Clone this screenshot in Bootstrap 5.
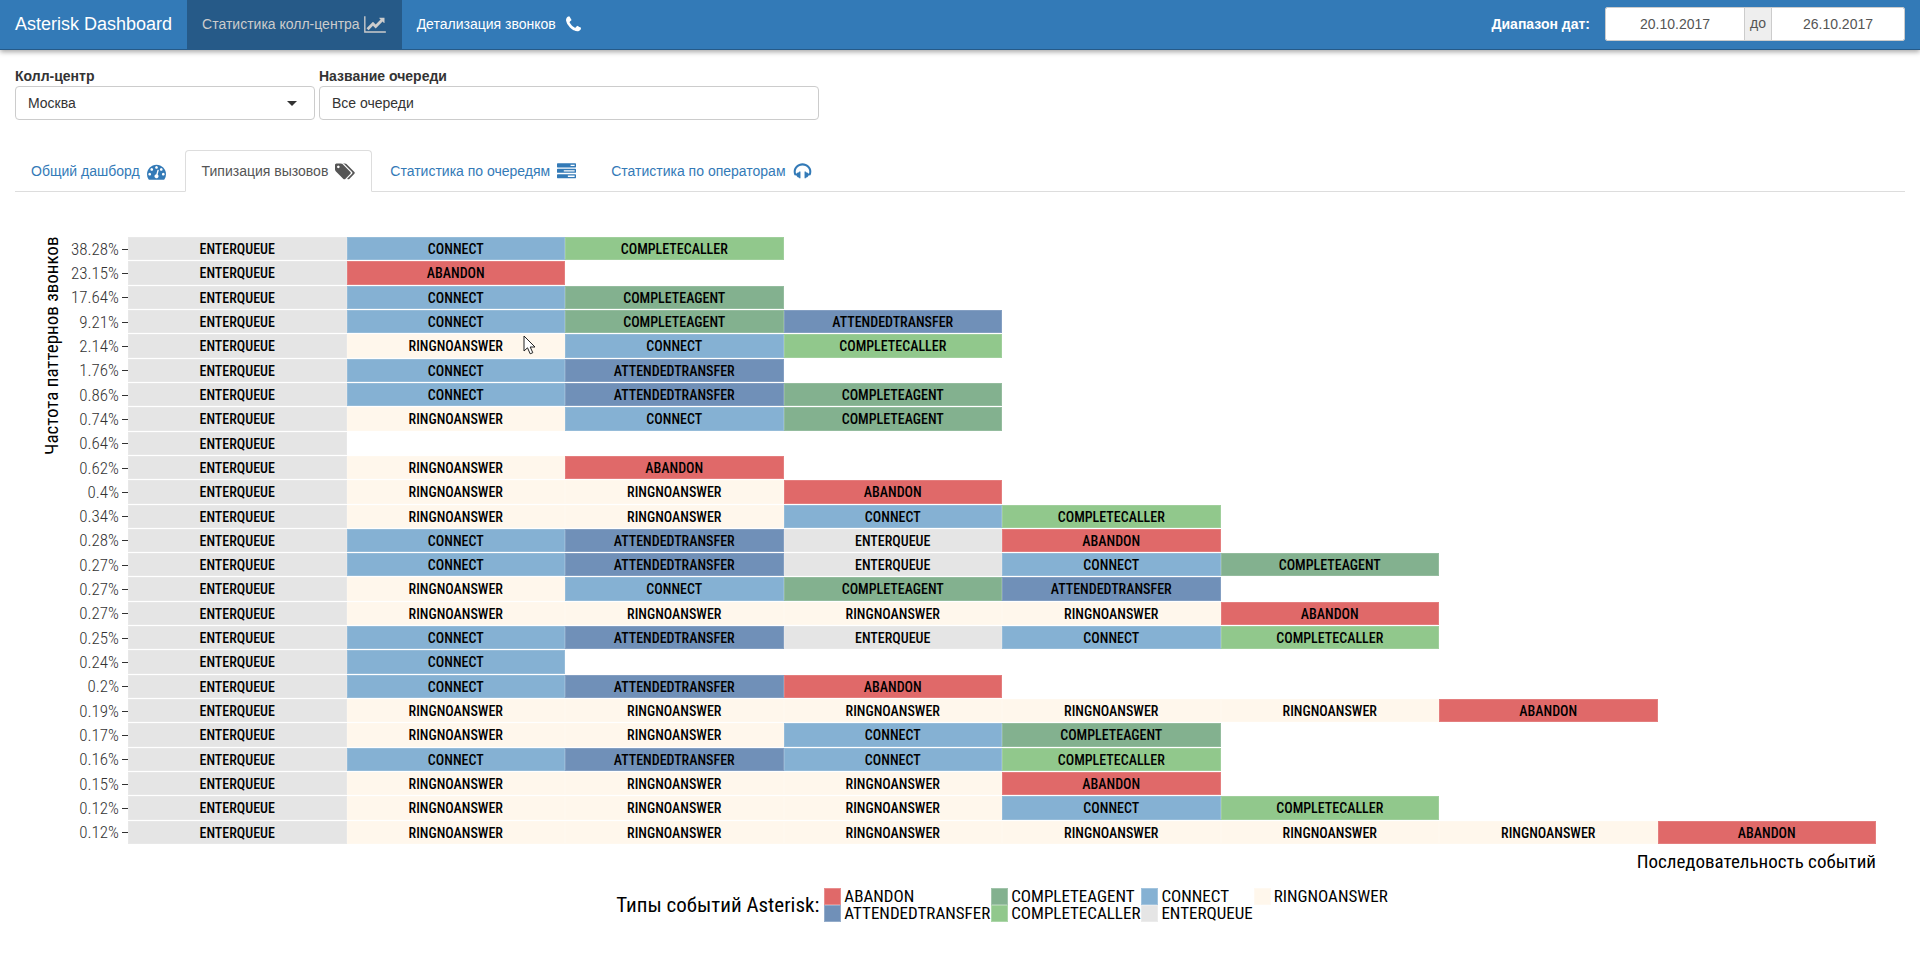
<!DOCTYPE html>
<html lang="ru">
<head>
<meta charset="utf-8">
<meta name="viewport" content="width=device-width, initial-scale=1">
<title>Asterisk Dashboard</title>
<link rel="stylesheet" href="https://cdn.jsdelivr.net/npm/bootstrap@5.3.0/dist/css/bootstrap.min.css">
<style>
  body { font-family: "Liberation Sans", Arial, sans-serif; font-size: 14px; line-height: 20px; color: #333; }
  .ico { height: 19px; fill: currentColor; flex: none; }

  .topbar { min-height: 50px; background: #337ab7; border-bottom: 1px solid #265a88; box-shadow: 0 2px 5px rgba(0,0,0,.35); padding: 0 15px; }
  .topbar .navbar-brand { font-size: 18px; line-height: 20px; color: #fff; padding: 14px 15px 15px 0; margin: 0; }
  .topbar .navbar-nav .nav-link { color: #fff; padding: 14px 16px 15px 15px; line-height: 20px; }
  .topbar .navbar-nav .nav-link.active { color: #ccc; background: #265a88; }
  .range-label { font-weight: 700; color: #fff; margin-right: 15px; }
  .range-form { padding-bottom: 2px; }
  .range-group { width: 300px; }
  .range-group .form-control { height: 34px; font-size: 14px; color: #555; border-color: #ccc; border-radius: 2px; text-align: center; padding: 6px 12px; }
  .range-group .range-from { flex: 0 0 140px; }
  .range-group .input-group-text { font-size: 14px; color: #555; background: #eee; border-color: #ccc; padding: 4px 5px; }

  .filters { padding: 16px 15px 0; gap: 4px; }
  .filters label { display: block; font-weight: 700; line-height: 20px; }
  .filters .form-select, .filters .form-control { height: 34px; font-size: 14px; color: #333; border-color: #ccc; border-radius: 4px; padding: 6px 12px; }
  .filters .form-select { background-image: url("data:image/svg+xml,%3csvg xmlns='http://www.w3.org/2000/svg' viewBox='0 0 10 5'%3e%3cpath fill='%23333' d='M0 0h10L5 5z'/%3e%3c/svg%3e"); background-size: 10px 5px; background-position: right 17px center; }
  .site { width: 300px; }
  .queue { width: 500px; }

  .tabs { margin: 30px 15px 0; border-color: #ddd; }
  .tabs .nav-link { color: #337ab7; padding: 10px 16px 10px 15px; line-height: 20px; margin-right: 2px; gap: 7px; border-radius: 4px 4px 0 0; }
  .tabs .nav-link.active { color: #555; border-color: #ddd #ddd #fff; padding-left: 16px; }

  .chart { font-family: "Roboto Condensed", Roboto, sans-serif; color: #000; padding: 45px 44px 0 42px; }
  .y-title { width: 20px; writing-mode: vertical-rl; transform: rotate(180deg); font-size: 19px; line-height: 20px; text-align: right; }
  .rows { display: grid; grid-template-columns: minmax(0, 1fr); grid-template-rows: repeat(25, 1fr); height: 608px; }
  .share { width: 66px; flex: none; gap: 3px; font-size: 17px; font-weight: 300; line-height: 23px; color: #333; }
  .share::after { content: ""; width: 6px; height: 1px; background: #333; }
  .track { min-width: 0; }
  .step { flex: 0 0 12.5%; border-bottom: 1px solid #fff; box-shadow: inset 0 0 0 1px rgba(255,255,255,.14); font-size: 14px; line-height: 24px; font-weight: 500; text-align: center; height: 100%; }
  .ev-ab { background: #e06969; }
  .ev-at { background: #7090b8; }
  .ev-ca { background: #83b18f; }
  .ev-cc { background: #91c88c; }
  .ev-cn { background: #85b1d3; }
  .ev-eq { background: #e5e5e5; }
  .ev-rn { background: #fff7ec; }
  .line { min-height: 0; }
  .x-title { font-size: 19px; line-height: 20px; text-align: right; padding-top: 7px; }
  .legend-row { padding: 16px 0 0 86px; gap: 5px; }
  .legend-title { font-size: 21px; line-height: 24px; }
  .legend-grid { display: grid; grid-template-rows: 17px 17px; grid-auto-flow: column; column-gap: 1px; font-size: 17px; line-height: 17px; }
  .key { gap: 3px; }
  .swatch { width: 17px; height: 17px; box-shadow: inset 0 0 0 1px rgba(255,255,255,.25); }
  .pointer { position: absolute; left: 176px; top: 1px; width: 13px; height: 20px; z-index: 2; }
</style>
</head>
<body>
<nav class="topbar navbar navbar-expand align-items-center">
  <a class="navbar-brand" href="#">Asterisk Dashboard</a>
  <ul class="navbar-nav me-auto">
    <li class="nav-item"><a class="nav-link active d-flex align-items-center gap-1" aria-current="page" href="#">Статистика колл-центра
      <svg class="ico" width="22" viewBox="0 0 2048 1792" aria-hidden="true"><path d="M2048 1536v128h-2048v-1536h128v1408h1920zM1920 288v435q0 21-19.5 29.5t-35.5-7.5l-121-121-633 633q-10 10-23 10t-23-10l-233-233-416 416-192-192 585-585q10-10 23-10t23 10l233 233 464-464-121-121q-16-16-7.5-35.5t29.5-19.5h435q14 0 23 9t9 23z"/></svg></a></li>
    <li class="nav-item"><a class="nav-link d-flex align-items-center gap-1" href="#">Детализация звонков
      <svg class="ico ms-1" width="19" viewBox="0 0 1792 1792" aria-hidden="true"><path d="M1600 1240q0 27-10 70.5t-21 68.5q-21 50-122 106-94 51-186 51-27 0-53-3.5t-57-12.5-47-14.5-55.5-20.5-49.5-18q-98-35-175-83-127-79-264-216t-216-264q-48-77-83-175-3-9-18-49.5t-20.5-55.5-14.5-47-12.5-57-3.5-53q0-92 51-186 56-101 106-122 25-11 68.5-21t70.5-10q14 0 21 3 18 6 53 76 11 19 30 54t35 63.5 31 53.5q3 4 17.5 25t21.5 35.5 7 28.5q0 20-28.5 50t-62 55-62 53-28.5 46q0 9 5 22.5t8.5 20.5 14 24 11.5 19q76 137 174 235t235 174q2 1 19 11.5t24 14 20.5 8.5 22.5 5q18 0 46-28.5t53-62 55-62 50-28.5q14 0 28.5 7t35.5 21.5 25 17.5q25 15 53.5 31t63.5 35 54 30q70 35 76 53 3 7 3 21z"/></svg></a></li>
  </ul>
  <form class="range-form d-flex align-items-center">
    <label class="range-label" for="from">Диапазон дат:</label>
    <div class="input-group range-group flex-nowrap">
      <input class="form-control range-from" id="from" type="text" value="20.10.2017">
      <span class="input-group-text">до</span>
      <input class="form-control" id="to" type="text" value="26.10.2017" aria-label="до">
    </div>
  </form>
</nav>

<form class="filters d-flex flex-wrap">
  <div class="site">
    <label for="site">Колл-центр</label>
    <select class="form-select" id="site"><option>Москва</option></select>
  </div>
  <div class="queue">
    <label for="queue">Название очереди</label>
    <input class="form-control" id="queue" type="text" value="Все очереди">
  </div>
</form>

<ul class="nav nav-tabs tabs">
  <li class="nav-item"><a class="nav-link d-flex align-items-center" href="#">Общий дашборд
    <svg class="ico" width="19" viewBox="0 0 1792 1792" aria-hidden="true"><path d="M384 1152q0-53-37.500-90.500t-90.500-37.500-90.500 37.500-37.500 90.500 37.500 90.500 90.500 37.500 90.500-37.500 37.500-90.500zm192-448q0-53-37.500-90.500t-90.500-37.500-90.500 37.500-37.500 90.500 37.500 90.500 90.500 37.500 90.500-37.500 37.500-90.500zm428 481l101-382q6-26-7.500-48.500t-38.500-29.500-48 6.500-30 39.500l-101 382q-60 5-107 43.500t-63 98.500q-20 77 20 146t117 89 146-20 89-117q16-60-6-117t-72-91zm660-33q0-53-37.500-90.500t-90.500-37.500-90.500 37.500-37.500 90.500 37.500 90.500 90.500 37.500 90.500-37.500 37.500-90.500zm-640-640q0-53-37.500-90.500t-90.500-37.500-90.500 37.500-37.500 90.500 37.500 90.500 90.500 37.500 90.500-37.500 37.500-90.500zm448 192q0-53-37.500-90.500t-90.500-37.500-90.500 37.500-37.500 90.500 37.500 90.500 90.500 37.500 90.500-37.500 37.500-90.500zm320 448q0 261-141 483-19 29-54 29h-1402q-35 0-54-29-141-221-141-483 0-182 71-348t191-286 286-191 348-71 348 71 286 191 191 286 71 348z"/></svg></a></li>
  <li class="nav-item"><a class="nav-link active d-flex align-items-center" aria-current="page" href="#">Типизация вызовов
    <svg class="ico" width="20" viewBox="0 0 1920 1792" aria-hidden="true"><path d="M448 448q0-53-37.500-90.500t-90.500-37.500-90.500 37.500-37.500 90.500 37.500 90.500 90.500 37.500 90.500-37.500 37.500-90.500zm1067 576q0 53-37 90l-491 492q-39 37-91 37-53 0-90-37l-715-716q-38-37-64.500-101t-26.500-117v-416q0-52 38-90t90-38h416q53 0 117 26.500t102 64.500l715 714q37 39 37 91zm384 0q0 53-37 90l-491 492q-39 37-91 37-36 0-59-14t-53-45l470-470q37-37 37-90 0-52-37-91l-715-714q-38-38-102-64.500t-117-26.500h224q53 0 117 26.500t102 64.500l715 714q37 39 37 91z"/></svg></a></li>
  <li class="nav-item"><a class="nav-link d-flex align-items-center" href="#">Статистика по очередям
    <svg class="ico" width="19" viewBox="0 0 1792 1792" aria-hidden="true"><path d="M1024 1408h640v-128h-640v128zm-384-512h1024v-128h-1024v128zm640-512h384v-128h-384v128zm512 832v256q0 26-19 45t-45 19h-1664q-26 0-45-19t-19-45v-256q0-26 19-45t45-19h1664q26 0 45 19t19 45zm0-512v256q0 26-19 45t-45 19h-1664q-26 0-45-19t-19-45v-256q0-26 19-45t45-19h1664q26 0 45 19t19 45zm0-512v256q0 26-19 45t-45 19h-1664q-26 0-45-19t-19-45v-256q0-26 19-45t45-19h1664q26 0 45 19t19 45z"/></svg></a></li>
  <li class="nav-item"><a class="nav-link d-flex align-items-center" href="#">Статистика по операторам
    <svg class="ico" width="19" viewBox="0 0 1792 1792" aria-hidden="true"><path d="M1728 886q0 166-60 314l-20 49-185 33q-22 83-90.500 136.500t-156.500 53.500v32q0 14-9 23t-23 9h-64q-14 0-23-9t-9-23v-576q0-14 9-23t23-9h64q14 0 23 9t9 23v32q71 0 130 35.500t93 95.500l68-12q29-95 29-193 0-148-88-279t-236.500-209-315.500-78-315.500 78-236.500 209-88 279q0 98 29 193l68 12q34-60 93-95.500t130-35.500v-32q0-14 9-23t23-9h64q14 0 23 9t9 23v576q0 14-9 23t-23 9h-64q-14 0-23-9t-9-23v-32q-88 0-156.500-53.500t-90.500-136.500l-185-33-20-49q-60-148-60-314 0-151 67-291t179-242.500 266-163.500 320-61 320 61 266 163.500 179 242.500 67 291z"/></svg></a></li>
</ul>

<main class="chart">
  <div class="d-flex">
    <div class="y-title">Частота паттернов звонков</div>
    <div class="rows flex-grow-1">
      <div class="line d-flex"><div class="share d-flex align-items-center justify-content-end">38.28%</div><div class="track d-flex flex-grow-1"><div class="step ev-eq">ENTERQUEUE</div><div class="step ev-cn">CONNECT</div><div class="step ev-cc">COMPLETECALLER</div></div></div>
      <div class="line d-flex"><div class="share d-flex align-items-center justify-content-end">23.15%</div><div class="track d-flex flex-grow-1"><div class="step ev-eq">ENTERQUEUE</div><div class="step ev-ab">ABANDON</div></div></div>
      <div class="line d-flex"><div class="share d-flex align-items-center justify-content-end">17.64%</div><div class="track d-flex flex-grow-1"><div class="step ev-eq">ENTERQUEUE</div><div class="step ev-cn">CONNECT</div><div class="step ev-ca">COMPLETEAGENT</div></div></div>
      <div class="line d-flex"><div class="share d-flex align-items-center justify-content-end">9.21%</div><div class="track d-flex flex-grow-1"><div class="step ev-eq">ENTERQUEUE</div><div class="step ev-cn">CONNECT</div><div class="step ev-ca">COMPLETEAGENT</div><div class="step ev-at">ATTENDEDTRANSFER</div></div></div>
      <div class="line d-flex"><div class="share d-flex align-items-center justify-content-end">2.14%</div><div class="track d-flex flex-grow-1"><div class="step ev-eq">ENTERQUEUE</div><div class="step ev-rn position-relative">RINGNOANSWER<svg class="pointer" viewBox="0 0 13 20" aria-hidden="true"><path d="M1 1v15l3.500-3.200 2.700 6 2.600-1.100-2.600-5.700H12z" fill="#fff" stroke="#222" stroke-width="1"/></svg></div><div class="step ev-cn">CONNECT</div><div class="step ev-cc">COMPLETECALLER</div></div></div>
      <div class="line d-flex"><div class="share d-flex align-items-center justify-content-end">1.76%</div><div class="track d-flex flex-grow-1"><div class="step ev-eq">ENTERQUEUE</div><div class="step ev-cn">CONNECT</div><div class="step ev-at">ATTENDEDTRANSFER</div></div></div>
      <div class="line d-flex"><div class="share d-flex align-items-center justify-content-end">0.86%</div><div class="track d-flex flex-grow-1"><div class="step ev-eq">ENTERQUEUE</div><div class="step ev-cn">CONNECT</div><div class="step ev-at">ATTENDEDTRANSFER</div><div class="step ev-ca">COMPLETEAGENT</div></div></div>
      <div class="line d-flex"><div class="share d-flex align-items-center justify-content-end">0.74%</div><div class="track d-flex flex-grow-1"><div class="step ev-eq">ENTERQUEUE</div><div class="step ev-rn">RINGNOANSWER</div><div class="step ev-cn">CONNECT</div><div class="step ev-ca">COMPLETEAGENT</div></div></div>
      <div class="line d-flex"><div class="share d-flex align-items-center justify-content-end">0.64%</div><div class="track d-flex flex-grow-1"><div class="step ev-eq">ENTERQUEUE</div></div></div>
      <div class="line d-flex"><div class="share d-flex align-items-center justify-content-end">0.62%</div><div class="track d-flex flex-grow-1"><div class="step ev-eq">ENTERQUEUE</div><div class="step ev-rn">RINGNOANSWER</div><div class="step ev-ab">ABANDON</div></div></div>
      <div class="line d-flex"><div class="share d-flex align-items-center justify-content-end">0.4%</div><div class="track d-flex flex-grow-1"><div class="step ev-eq">ENTERQUEUE</div><div class="step ev-rn">RINGNOANSWER</div><div class="step ev-rn">RINGNOANSWER</div><div class="step ev-ab">ABANDON</div></div></div>
      <div class="line d-flex"><div class="share d-flex align-items-center justify-content-end">0.34%</div><div class="track d-flex flex-grow-1"><div class="step ev-eq">ENTERQUEUE</div><div class="step ev-rn">RINGNOANSWER</div><div class="step ev-rn">RINGNOANSWER</div><div class="step ev-cn">CONNECT</div><div class="step ev-cc">COMPLETECALLER</div></div></div>
      <div class="line d-flex"><div class="share d-flex align-items-center justify-content-end">0.28%</div><div class="track d-flex flex-grow-1"><div class="step ev-eq">ENTERQUEUE</div><div class="step ev-cn">CONNECT</div><div class="step ev-at">ATTENDEDTRANSFER</div><div class="step ev-eq">ENTERQUEUE</div><div class="step ev-ab">ABANDON</div></div></div>
      <div class="line d-flex"><div class="share d-flex align-items-center justify-content-end">0.27%</div><div class="track d-flex flex-grow-1"><div class="step ev-eq">ENTERQUEUE</div><div class="step ev-cn">CONNECT</div><div class="step ev-at">ATTENDEDTRANSFER</div><div class="step ev-eq">ENTERQUEUE</div><div class="step ev-cn">CONNECT</div><div class="step ev-ca">COMPLETEAGENT</div></div></div>
      <div class="line d-flex"><div class="share d-flex align-items-center justify-content-end">0.27%</div><div class="track d-flex flex-grow-1"><div class="step ev-eq">ENTERQUEUE</div><div class="step ev-rn">RINGNOANSWER</div><div class="step ev-cn">CONNECT</div><div class="step ev-ca">COMPLETEAGENT</div><div class="step ev-at">ATTENDEDTRANSFER</div></div></div>
      <div class="line d-flex"><div class="share d-flex align-items-center justify-content-end">0.27%</div><div class="track d-flex flex-grow-1"><div class="step ev-eq">ENTERQUEUE</div><div class="step ev-rn">RINGNOANSWER</div><div class="step ev-rn">RINGNOANSWER</div><div class="step ev-rn">RINGNOANSWER</div><div class="step ev-rn">RINGNOANSWER</div><div class="step ev-ab">ABANDON</div></div></div>
      <div class="line d-flex"><div class="share d-flex align-items-center justify-content-end">0.25%</div><div class="track d-flex flex-grow-1"><div class="step ev-eq">ENTERQUEUE</div><div class="step ev-cn">CONNECT</div><div class="step ev-at">ATTENDEDTRANSFER</div><div class="step ev-eq">ENTERQUEUE</div><div class="step ev-cn">CONNECT</div><div class="step ev-cc">COMPLETECALLER</div></div></div>
      <div class="line d-flex"><div class="share d-flex align-items-center justify-content-end">0.24%</div><div class="track d-flex flex-grow-1"><div class="step ev-eq">ENTERQUEUE</div><div class="step ev-cn">CONNECT</div></div></div>
      <div class="line d-flex"><div class="share d-flex align-items-center justify-content-end">0.2%</div><div class="track d-flex flex-grow-1"><div class="step ev-eq">ENTERQUEUE</div><div class="step ev-cn">CONNECT</div><div class="step ev-at">ATTENDEDTRANSFER</div><div class="step ev-ab">ABANDON</div></div></div>
      <div class="line d-flex"><div class="share d-flex align-items-center justify-content-end">0.19%</div><div class="track d-flex flex-grow-1"><div class="step ev-eq">ENTERQUEUE</div><div class="step ev-rn">RINGNOANSWER</div><div class="step ev-rn">RINGNOANSWER</div><div class="step ev-rn">RINGNOANSWER</div><div class="step ev-rn">RINGNOANSWER</div><div class="step ev-rn">RINGNOANSWER</div><div class="step ev-ab">ABANDON</div></div></div>
      <div class="line d-flex"><div class="share d-flex align-items-center justify-content-end">0.17%</div><div class="track d-flex flex-grow-1"><div class="step ev-eq">ENTERQUEUE</div><div class="step ev-rn">RINGNOANSWER</div><div class="step ev-rn">RINGNOANSWER</div><div class="step ev-cn">CONNECT</div><div class="step ev-ca">COMPLETEAGENT</div></div></div>
      <div class="line d-flex"><div class="share d-flex align-items-center justify-content-end">0.16%</div><div class="track d-flex flex-grow-1"><div class="step ev-eq">ENTERQUEUE</div><div class="step ev-cn">CONNECT</div><div class="step ev-at">ATTENDEDTRANSFER</div><div class="step ev-cn">CONNECT</div><div class="step ev-cc">COMPLETECALLER</div></div></div>
      <div class="line d-flex"><div class="share d-flex align-items-center justify-content-end">0.15%</div><div class="track d-flex flex-grow-1"><div class="step ev-eq">ENTERQUEUE</div><div class="step ev-rn">RINGNOANSWER</div><div class="step ev-rn">RINGNOANSWER</div><div class="step ev-rn">RINGNOANSWER</div><div class="step ev-ab">ABANDON</div></div></div>
      <div class="line d-flex"><div class="share d-flex align-items-center justify-content-end">0.12%</div><div class="track d-flex flex-grow-1"><div class="step ev-eq">ENTERQUEUE</div><div class="step ev-rn">RINGNOANSWER</div><div class="step ev-rn">RINGNOANSWER</div><div class="step ev-rn">RINGNOANSWER</div><div class="step ev-cn">CONNECT</div><div class="step ev-cc">COMPLETECALLER</div></div></div>
      <div class="line d-flex"><div class="share d-flex align-items-center justify-content-end">0.12%</div><div class="track d-flex flex-grow-1"><div class="step ev-eq">ENTERQUEUE</div><div class="step ev-rn">RINGNOANSWER</div><div class="step ev-rn">RINGNOANSWER</div><div class="step ev-rn">RINGNOANSWER</div><div class="step ev-rn">RINGNOANSWER</div><div class="step ev-rn">RINGNOANSWER</div><div class="step ev-rn">RINGNOANSWER</div><div class="step ev-ab">ABANDON</div></div></div>
    </div>
  </div>
  <div class="x-title">Последовательность событий</div>
  <div class="legend-row d-flex justify-content-center align-items-center">
    <div class="legend-title">Типы событий Asterisk:</div>
    <div class="legend-grid">
      <div class="key d-flex"><span class="swatch ev-ab"></span>ABANDON</div>
      <div class="key d-flex"><span class="swatch ev-at"></span>ATTENDEDTRANSFER</div>
      <div class="key d-flex"><span class="swatch ev-ca"></span>COMPLETEAGENT</div>
      <div class="key d-flex"><span class="swatch ev-cc"></span>COMPLETECALLER</div>
      <div class="key d-flex"><span class="swatch ev-cn"></span>CONNECT</div>
      <div class="key d-flex"><span class="swatch ev-eq"></span>ENTERQUEUE</div>
      <div class="key d-flex"><span class="swatch ev-rn"></span>RINGNOANSWER</div>
    </div>
  </div>
</main>
<script src="https://cdn.jsdelivr.net/npm/bootstrap@5.3.0/dist/js/bootstrap.bundle.min.js"></script>
</body>
</html>
